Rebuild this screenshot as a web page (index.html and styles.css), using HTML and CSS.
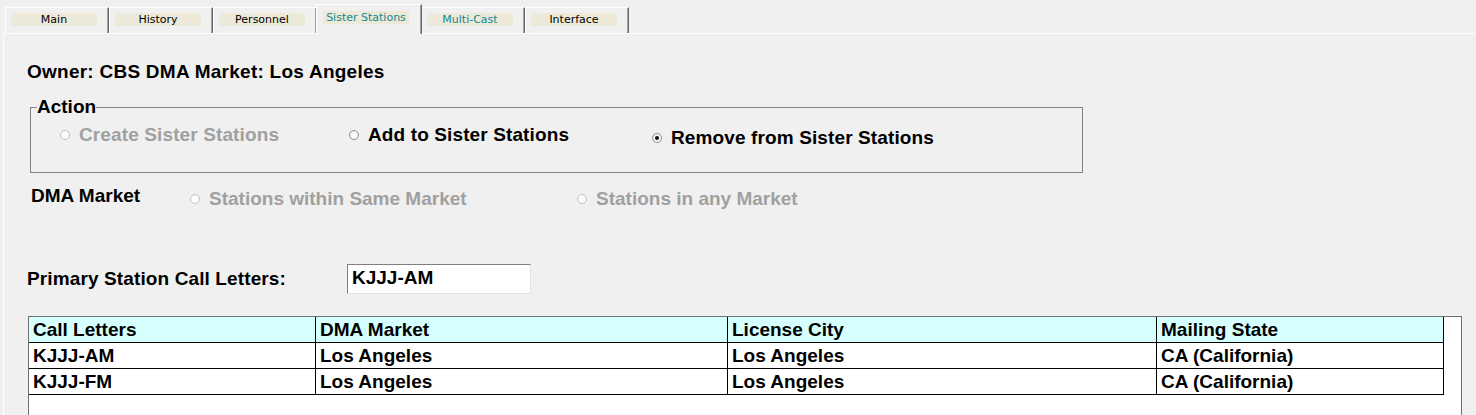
FILE: index.html
```html
<!DOCTYPE html>
<html lang="en">
<head>
<meta charset="utf-8">
<title>Sister Stations</title>
<link rel="stylesheet" href="styles.css">
</head>
<body>
<div class="tabbar">
  <div class="tab"><span class="tab-label">Main</span></div>
  <div class="tab"><span class="tab-label">History</span></div>
  <div class="tab"><span class="tab-label">Personnel</span></div>
  <div class="tab tab-selected"><span class="tab-label teal">Sister Stations</span></div>
  <div class="tab"><span class="tab-label teal">Multi-Cast</span></div>
  <div class="tab"><span class="tab-label">Interface</span></div>
</div>
<div class="panel">
  <p class="owner">Owner: CBS DMA Market: Los Angeles</p>
  <fieldset class="action">
    <legend class="action-legend">Action</legend>
    <div class="radio-row">
      <label class="radio-item item-create disabled"><span class="radio"></span>Create Sister Stations</label>
      <label class="radio-item item-add"><span class="radio"></span>Add to Sister Stations</label>
      <label class="radio-item lower"><span class="radio checked"></span>Remove from Sister Stations</label>
    </div>
  </fieldset>
  <div class="dma-row">
    <span class="dma-label">DMA Market</span>
    <label class="radio-item lower item-same disabled"><span class="radio"></span>Stations within Same Market</label>
    <label class="radio-item lower disabled"><span class="radio"></span>Stations in any Market</label>
  </div>
  <div class="primary-row">
    <span class="primary-label">Primary Station Call Letters:</span>
    <span class="textbox">KJJJ-AM</span>
  </div>
  <div class="grid-wrap">
    <div class="grid">
      <div class="cell head">Call Letters</div>
      <div class="cell head">DMA Market</div>
      <div class="cell head">License City</div>
      <div class="cell head">Mailing State</div>
      <div class="cell">KJJJ-AM</div>
      <div class="cell">Los Angeles</div>
      <div class="cell">Los Angeles</div>
      <div class="cell">CA (California)</div>
      <div class="cell">KJJJ-FM</div>
      <div class="cell">Los Angeles</div>
      <div class="cell">Los Angeles</div>
      <div class="cell">CA (California)</div>
    </div>
  </div>
</div>
</body>
</html>
```

FILE: styles.css
```css
html, body {
  margin: 0;
  padding: 0;
  background: #f0f0f0;
}
body {
  font-family: "Liberation Sans", Arial, sans-serif;
  font-weight: bold;
  font-size: 19px;
  line-height: 22px;
  color: #000;
  overflow: hidden;
}

/* Tabs */
.tabbar {
  display: flex;
  align-items: flex-end;
  height: 34px;
  padding-left: 5px;
}
.tab {
  box-sizing: border-box;
  width: 104px;
  height: 26px;
  margin-bottom: 1px;
  border-top: 1px solid #fff;
  border-left: 1px solid #fff;
  border-right: 1px solid #6a6a6a;
  box-shadow: inset -1px 0 #a0a0a0;
  padding: 5px 0 0 5px;
  background: #f0f0f0;
}
.tab-label {
  display: block;
  width: 86px;
  height: 13px;
  background: #ece9d8;
  font-family: "DejaVu Sans", sans-serif;
  font-weight: normal;
  font-size: 11px;
  line-height: 13px;
  text-align: center;
  color: #000;
}
.tab-label.teal {
  color: #14868f;
}
.tab-selected {
  position: relative;
  z-index: 1;
  width: 106px;
  height: 30px;
  margin: 0 -1px;
  padding: 6px 0 0 6px;
}

/* Panel */
.panel {
  margin: -1px 0 0 3px;
  border-top: 1px solid #fff;
  border-left: 1px solid #fff;
  padding: 27px 0 0 23px;
  height: 400px;
}
.owner {
  margin: 0;
  letter-spacing: 0.25px;
}

.action {
  box-sizing: border-box;
  width: 1053px;
  margin: 13px 0 0 3px;
  padding: 0 0 23px 0;
  border: 1px solid #828282;
}
.action-legend {
  margin-left: 6px;
  padding: 0;
}
.radio-row {
  display: flex;
  align-items: flex-start;
  margin-top: 6px;
  padding-left: 29px;
  letter-spacing: 0.12px;
}
.radio-item {
  display: flex;
  align-items: center;
  white-space: nowrap;
}
.radio-item.lower {
  margin-top: 3px;
}
.item-create {
  width: 289px;
}
.item-add {
  width: 303px;
}
.disabled {
  color: #a0a0a0;
}
.radio {
  position: relative;
  box-sizing: border-box;
  width: 10px;
  height: 10px;
  margin-right: 9px;
  border-radius: 50%;
  border: 1px solid #8e8f8f;
  background: radial-gradient(circle at 60% 60%, #ffffff 0, #f4f4f4 55%, #d8d8d8 100%);
}
.disabled .radio {
  border-color: #c2c2c2;
  background: #fbfbfb;
}
.radio.checked::after {
  content: "";
  position: absolute;
  left: 2px;
  top: 2px;
  width: 4px;
  height: 4px;
  border-radius: 50%;
  background: #111;
}

.dma-row {
  display: flex;
  align-items: flex-start;
  margin: 12px 0 0 4px;
}
.dma-label {
  width: 159px;
}
.item-same {
  width: 387px;
}

.primary-row {
  display: flex;
  align-items: flex-start;
  margin-top: 54px;
}
.primary-label {
  width: 320px;
  margin-top: 4px;
  letter-spacing: 0.12px;
}
.textbox {
  box-sizing: border-box;
  width: 184px;
  height: 30px;
  padding: 2px 4px 0;
  background: #fff;
  border: 1px solid;
  border-color: #7f7f7f #e3e3e3 #e3e3e3 #7f7f7f;
}

.grid-wrap {
  box-sizing: border-box;
  width: 1434px;
  height: 120px;
  margin: 22px 0 0 1px;
  border: 1px solid #6f6f6f;
  background: #fff;
}
.grid {
  display: grid;
  grid-template-columns: 287px 412px 429px 287px;
}
.cell {
  box-sizing: border-box;
  height: 26px;
  padding: 2px 3px 0 4px;
  border-right: 1px solid #000;
  border-bottom: 1px solid #000;
  white-space: nowrap;
  overflow: hidden;
}
.cell.head {
  background: #d6ffff;
}
```
